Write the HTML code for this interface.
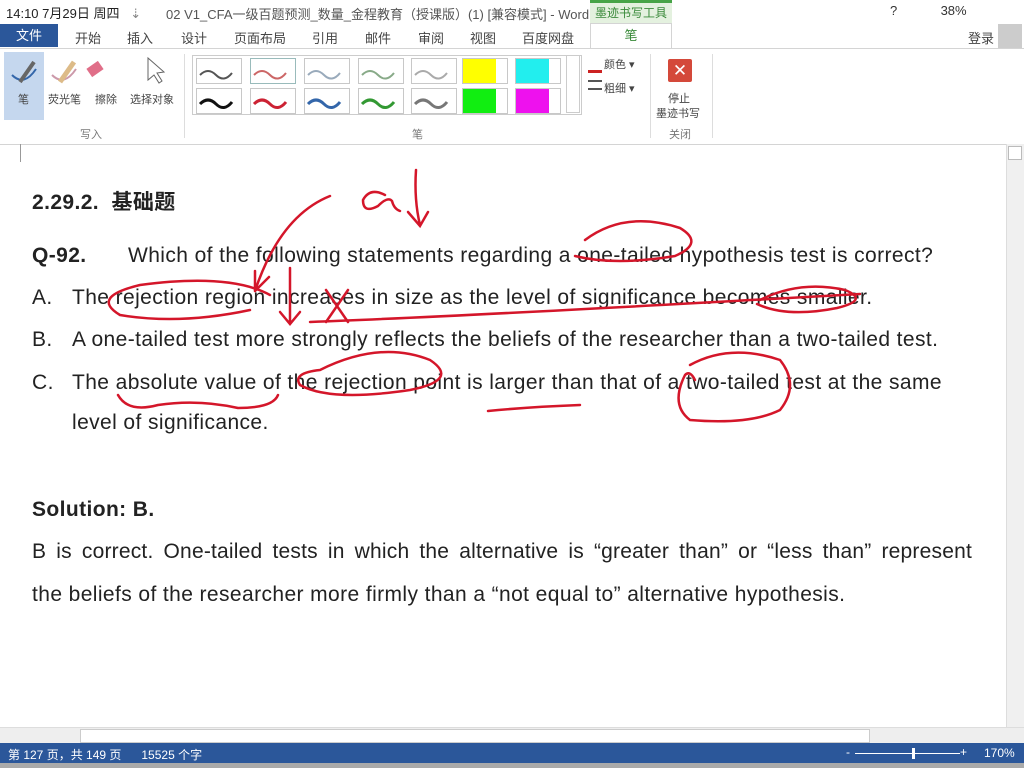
<!DOCTYPE html>
<html><head><meta charset="utf-8"><style>
body{margin:0;width:1024px;height:768px;overflow:hidden;background:#fff;font-family:"Liberation Sans","Noto Sans CJK SC",sans-serif;position:relative}
.a{position:absolute;white-space:nowrap}
.t{font-size:13px;color:#444}
.doc{font-size:21px;letter-spacing:0.4px;color:#222}
.pen{position:absolute;width:44px;height:24px;border:1px solid #c8c8c8;background:#fff}
</style></head><body>
<div class="a t" style="left:6px;top:3px;font-size:13px;color:#222">14:10 7月29日 周四 &nbsp; <span style="color:#888">⇣</span></div>
<div class="a t" style="left:166px;top:4px;color:#555">02 V1_CFA一级百题预测_数量_金程教育（授课版）(1) [兼容模式] - Word</div>
<div class="a" style="left:590px;top:0;width:82px;height:23px;background:#e4f1df;border-top:3px solid #47a447;box-sizing:border-box;font-size:12px;color:#3a8a3a;text-align:center;line-height:20px">墨迹书写工具</div>
<div class="a t" style="left:890px;top:3px;color:#333">?&nbsp;&nbsp;&nbsp;&nbsp;&nbsp;&nbsp;&nbsp;&nbsp;&nbsp;&nbsp;&nbsp;&nbsp;38%</div>
<div class="a" style="left:0;top:24px;width:58px;height:23px;background:#2b579a;color:#fff;font-size:13px;line-height:23px;text-align:center">文件</div>
<div class="a t" style="left:75px;top:28px">开始</div><div class="a t" style="left:127px;top:28px">插入</div><div class="a t" style="left:181px;top:28px">设计</div><div class="a t" style="left:234px;top:28px">页面布局</div><div class="a t" style="left:312px;top:28px">引用</div><div class="a t" style="left:365px;top:28px">邮件</div><div class="a t" style="left:418px;top:28px">审阅</div><div class="a t" style="left:470px;top:28px">视图</div><div class="a t" style="left:522px;top:28px">百度网盘</div>
<div class="a" style="left:590px;top:23px;width:82px;height:26px;background:#fff;border:1px solid #d4d4d4;border-bottom:none;box-sizing:border-box;text-align:center;color:#3a8a3a;font-size:13px;line-height:24px">笔</div>
<div class="a t" style="left:968px;top:28px">登录</div>
<div class="a" style="left:998px;top:24px;width:24px;height:24px;background:#ccc"></div>
<div class="a" style="left:0;top:48px;width:1024px;height:95px;background:#fff;border-top:1px solid #d4d4d4;border-bottom:1px solid #d4d4d4"></div>
<div class="a" style="left:4px;top:52px;width:40px;height:68px;background:#c5d7ee"></div>
<div class="a t" style="left:18px;top:91px;font-size:11px">笔</div>
<div class="a t" style="left:48px;top:91px;font-size:11px">荧光笔</div>
<div class="a t" style="left:95px;top:91px;font-size:11px">擦除</div>
<div class="a t" style="left:130px;top:91px;font-size:11px">选择对象</div>
<div class="a" style="left:88px;top:64px;width:14px;height:10px;background:#e06e88;transform:rotate(-35deg)"></div>
<div class="a t" style="left:80px;top:126px;font-size:11px;color:#777">写入</div>
<div class="a t" style="left:412px;top:126px;font-size:11px;color:#777">笔</div>
<div class="a t" style="left:669px;top:126px;font-size:11px;color:#777">关闭</div>
<div class="a" style="left:184px;top:54px;width:1px;height:84px;background:#ddd"></div>
<div class="a" style="left:650px;top:54px;width:1px;height:84px;background:#ddd"></div>
<div class="a" style="left:712px;top:54px;width:1px;height:84px;background:#ddd"></div>
<div class="a" style="left:192px;top:55px;width:388px;height:58px;border:1px solid #ccc"></div>
<div class="pen" style="left:196px;top:58px"></div><div class="pen" style="left:250px;top:58px;border-color:#9bb"></div><div class="pen" style="left:304px;top:58px"></div><div class="pen" style="left:358px;top:58px"></div><div class="pen" style="left:411px;top:58px"></div>
<div class="pen" style="left:462px;top:58px;background:linear-gradient(90deg,#ff0 75%,#fff 75%)"></div><div class="pen" style="left:515px;top:58px;background:linear-gradient(90deg,#2ee 75%,#fff 75%)"></div>
<div class="pen" style="left:196px;top:88px"></div><div class="pen" style="left:250px;top:88px"></div><div class="pen" style="left:304px;top:88px"></div><div class="pen" style="left:358px;top:88px"></div><div class="pen" style="left:411px;top:88px"></div>
<div class="pen" style="left:462px;top:88px;background:linear-gradient(90deg,#1e1 75%,#fff 75%)"></div><div class="pen" style="left:515px;top:88px;background:linear-gradient(90deg,#e1e 75%,#fff 75%)"></div>
<svg class="a" style="left:0;top:0" width="600" height="120"><g fill="none" stroke-width="2">
<path d="M200 75q8-8 16 0t16-2" stroke="#555"/><path d="M254 75q8-8 16 0t16-2" stroke="#c66"/><path d="M308 75q8-8 16 0t16-2" stroke="#9ab"/><path d="M362 75q8-8 16 0t16-2" stroke="#8a8"/><path d="M415 75q8-8 16 0t16-2" stroke="#aaa"/>
<path d="M200 104q8-8 16 0t16-2" stroke="#111" stroke-width="3"/><path d="M254 104q8-8 16 0t16-2" stroke="#c23" stroke-width="3"/><path d="M308 104q8-8 16 0t16-2" stroke="#36a" stroke-width="3"/><path d="M362 104q8-8 16 0t16-2" stroke="#393" stroke-width="3"/><path d="M415 104q8-8 16 0t16-2" stroke="#777" stroke-width="3"/>
<path d="M12 75q12 12 24-6" stroke="#36a"/><path d="M20 82l14-20" stroke="#666" stroke-width="4"/><path d="M52 75q12 12 24-6" stroke="#c9a"/><path d="M60 82l14-20" stroke="#db8" stroke-width="5"/><path d="M148 58l0 22 6-5 5 8 3-2-5-8 7-1z" stroke="#666" stroke-width="1"/></g></svg>
<div class="a" style="left:668px;top:59px;width:24px;height:23px;background:#d4493a;border-radius:2px;color:#fff;text-align:center;font-size:17px;line-height:23px">✕</div>
<div class="a t" style="left:668px;top:90px;font-size:11px">停止</div><div class="a t" style="left:656px;top:105px;font-size:11px">墨迹书写</div>
<div class="a" style="left:588px;top:70px;width:14px;height:3px;background:#c22"></div>
<div class="a t" style="left:604px;top:56px;font-size:11px">颜色 ▾</div>
<div class="a" style="left:588px;top:80px;width:14px;height:10px;border-top:2px solid #555;border-bottom:2px solid #555;box-sizing:border-box"></div>
<div class="a t" style="left:604px;top:80px;font-size:11px">粗细 ▾</div>
<div class="a" style="left:566px;top:55px;width:14px;height:58px;border:1px solid #ccc;box-sizing:border-box"></div>
<div class="a" style="left:1006px;top:144px;width:18px;height:583px;background:#f0f0f0;border-left:1px solid #ddd"></div>
<div class="a" style="left:1008px;top:146px;width:14px;height:14px;border:1px solid #bbb;box-sizing:border-box;background:#fff"></div>
<div class="a" style="left:0;top:727px;width:1024px;height:16px;background:#eee;border-top:1px solid #ddd"></div>
<div class="a" style="left:80px;top:729px;width:788px;height:12px;background:#fff;border:1px solid #ccc"></div>
<div class="a" style="left:0;top:743px;width:1024px;height:20px;background:#2b579a"></div>
<div class="a" style="left:8px;top:746px;color:#fff;font-size:12px">第 127 页，共 149 页 &nbsp;&nbsp;&nbsp;&nbsp; 15525 个字</div>
<div class="a" style="left:855px;top:753px;width:105px;height:1px;background:#fff"></div>
<div class="a" style="left:912px;top:748px;width:3px;height:11px;background:#fff"></div>
<div class="a" style="left:846px;top:745px;color:#fff;font-size:12px">-</div><div class="a" style="left:960px;top:745px;color:#fff;font-size:12px">+</div>
<div class="a" style="left:984px;top:746px;color:#fff;font-size:12px">170%</div>
<div class="a" style="left:0;top:763px;width:1024px;height:5px;background:#aaa"></div>
<div class="a" style="left:20px;top:144px;width:1px;height:18px;background:#999"></div>
<div class="a doc" style="left:32px;top:186px;font-weight:bold;font-size:21px">2.29.2.&nbsp; 基础题</div>
<div class="a doc" style="left:32px;top:244px"><b>Q-92.</b></div>
<div class="a doc" style="left:128px;top:244px">Which of the following statements regarding a one-tailed hypothesis test is correct?</div>
<div class="a doc" style="left:32px;top:286px">A.</div><div class="a doc" style="left:72px;top:286px">The rejection region increases in size as the level of significance becomes smaller.</div>
<div class="a doc" style="left:32px;top:328px">B.</div><div class="a doc" style="left:72px;top:328px">A one-tailed test more strongly reflects the beliefs of the researcher than a two-tailed test.</div>
<div class="a doc" style="left:32px;top:371px">C.</div><div class="a doc" style="left:72px;top:371px">The absolute value of the rejection point is larger than that of a two-tailed test at the same</div>
<div class="a doc" style="left:72px;top:411px">level of significance.</div>
<div class="a doc" style="left:32px;top:498px;font-weight:bold">Solution: B.</div>
<div class="a doc" style="left:32px;top:540px;width:940px;white-space:normal;text-align:justify;text-align-last:justify;letter-spacing:0.2px">B is correct. One-tailed tests in which the alternative is “greater than” or “less than” represent</div>
<div class="a doc" style="left:32px;top:583px">the beliefs of the researcher more firmly than a “not equal to” alternative hypothesis.</div>
<svg class="a" style="left:0;top:0" width="1024" height="768"><g fill="none" stroke="#d4162a" stroke-width="2.5" stroke-linecap="round">
<path d="M330 196q-50 20-75 95M255 291l0-20M255 291l14-14"/>
<path d="M385 195q-15-8-22 5 0 14 15 6 10-10 14-5 2 8 8 10"/>
<path d="M416 170q-2 30 4 55M408 212l12 14 8-14"/>
<path d="M585 240q40-30 95-12 25 15-5 28-60 10-100 0"/>
<path d="M270 295q-40-22-130-10-50 12-20 30 60 10 130-5"/>
<path d="M290 268l0 55M280 312l10 12 10-12"/>
<path d="M326 290l22 32M348 290l-22 32"/>
<path d="M310 322q160-6 550-28"/><path d="M760 300q40-20 85-10 25 10-8 18-50 10-80-4"/>
<path d="M320 370q60-30 110-10 30 20-20 30-80 12-110-5-8-12 20-15"/>
<path d="M118 395q10 18 40 10 40-6 80 3 35 0 40-13"/>
<path d="M488 411q40-4 92-6"/>
<path d="M690 365q40-22 90-5 20 25 0 50-30 15-90 10-20-15-5-45 5-5 10 5"/>
</g></svg>
</body></html>
